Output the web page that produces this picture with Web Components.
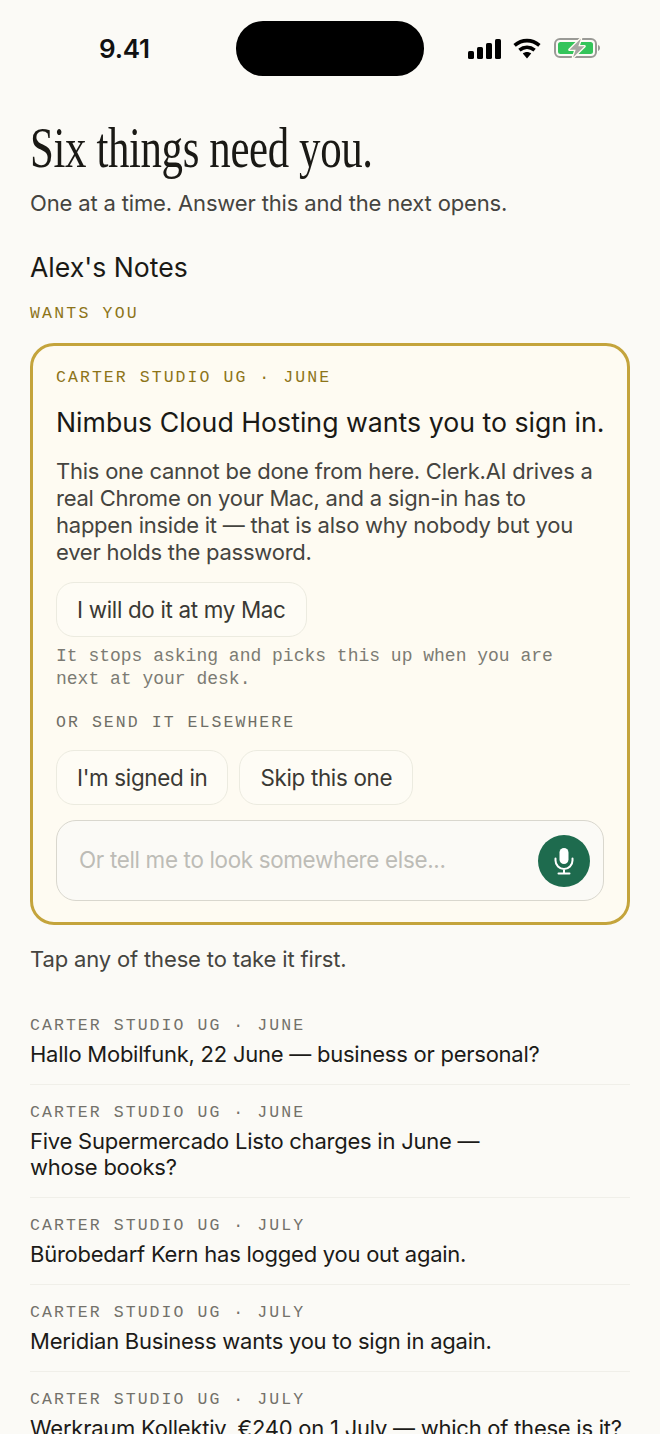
<!DOCTYPE html>
<html lang="en">
<head>
<meta charset="utf-8">
<title>Six things need you</title>
<style>
  html, body { margin: 0; height: 1434px; overflow: hidden; background: #fbfaf6; }
  body { font-family: Inter, "Liberation Sans", sans-serif; color: #1c1b18; }
</style>
</head>
<body>
<template id="status-tpl">
  <style>
    :host { display: flex; align-items: center; height: 96px; box-sizing: border-box; padding: 0 0 0 69px; }
    .time { width: 137px; margin-top: 2px; font: 600 26px/1 Inter, sans-serif; letter-spacing: -.2px; color: #111; }
    .island { width: 188px; height: 55px; border-radius: 27px; background: #000; }
    .icons { display: flex; align-items: center; gap: 11px; margin-left: 44px; }
    .batt { margin-left: 2px; }
    svg { display: block; }
  </style>
  <span class="time">9.41</span>
  <div class="island"></div>
  <div class="icons">
    <svg width="34" height="21" viewBox="0 0 34 21"><g fill="#000"><rect x="0" y="13" width="6" height="8" rx="1.6"/><rect x="9" y="9" width="6" height="12" rx="1.6"/><rect x="18" y="5" width="6" height="16" rx="1.6"/><rect x="27" y="1" width="6" height="20" rx="1.6"/></g></svg>
    <svg width="28" height="21" viewBox="0 0 28 21"><g fill="none" stroke="#000" stroke-width="3.6"><path d="M1.6 7.4C9 1 19 1 26.4 7.4"/><path d="M6.4 12.2C11 8.4 17 8.4 21.6 12.2"/></g><path d="M9.8 15.4 14 20.4l4.2-5c-2.4-2-6-2-8.4 0Z" fill="#000"/></svg>
    <svg class="batt" width="46" height="24" viewBox="0 0 46 24"><rect x="1" y="3" width="41" height="18" rx="5" fill="none" stroke="#9a9a96" stroke-width="2"/><rect x="4" y="6" width="35" height="12" rx="2.5" fill="#34c45a"/><path d="M44 9c1.3.4 2 1.6 2 3s-.7 2.6-2 3Z" fill="#9a9a96"/><path id="bolt" d="M27 2.5 15.5 13.8h6.2L19 21.5l11.5-11.3h-6.2Z" fill="#a6a6a2" stroke="#fffcf2" stroke-width="2.6" paint-order="stroke" stroke-linejoin="round"/></svg>
  </div>
</template>

<template id="intro-tpl">
  <style>
    :host { display: block; margin-top: 22px; }
    h1 { margin: 0; font: 400 56px/60px "Liberation Serif", serif; color: #1a1915; letter-spacing: -.5px; white-space: nowrap; }
    h1 span { display: inline-block; transform: scaleX(.766); transform-origin: 0 50%; }
    p { margin: 10px 0 0; font-size: 22px; letter-spacing: -.15px; line-height: 30px; color: #45443f; }
    h2 { margin: 32px 0 0; font: 400 26.6px/34px Inter, sans-serif; color: #1a1915; }
  </style>
  <h1><span><slot name="title"></slot></span></h1>
  <p><slot name="sub"></slot></p>
  <h2><slot name="project"></slot></h2>
</template>

<template id="label-tpl">
  <style>
    :host { display: block; font: 400 16.5px/20px "Liberation Mono", monospace; letter-spacing: 2.06px; color: var(--label-color, #73716a); }
  </style>
  <slot></slot>
</template>

<template id="button-tpl">
  <style>
    :host { display: inline-flex; align-items: center; height: 55px; box-sizing: border-box; padding: 1px 20px 0; border: 1.5px solid #ecebe0; border-radius: 18px; background: #fefcf5; font: 400 22.4px/1 Inter, sans-serif; letter-spacing: -.32px; color: #3a3934; white-space: nowrap; }
  </style>
  <slot></slot>
</template>

<template id="voice-tpl">
  <style>
    :host { display: flex; align-items: center; justify-content: space-between; height: 81px; box-sizing: border-box; padding: 0 13.5px 0 22px; border: 1.5px solid #d9d7ce; border-radius: 20px; background: #fbfaf6; font: 400 22.4px/1 Inter, sans-serif; letter-spacing: -.32px; color: #bdbcb6; }
    .mic { width: 52px; height: 52px; border-radius: 50%; background: #1e6b4e; display: flex; align-items: center; justify-content: center; }
    svg { display: block; }
  </style>
  <span><slot></slot></span>
  <div class="mic">
    <svg width="24" height="28" viewBox="0 0 24 28" fill="none" stroke="#fff" stroke-width="2" stroke-linecap="round"><rect x="7.5" y="1" width="9" height="16" rx="4.5" fill="#fff" stroke="none"/><path d="M3.5 11.5v2a8.5 8.5 0 0 0 17 0v-2M12 22v4.5M6.5 26.5h11"/></svg>
  </div>
</template>

<template id="card-tpl">
  <style>
    :host { display: block; margin-top: 19px; box-sizing: border-box; height: 582px; padding: 22px 23px 0 23px; border: 3px solid #c4a43c; border-radius: 24px; background: #fefbf2; --label-color: #8d7419; }
    h3 { margin: 16px 0 0; font: 400 26.7px/36px Inter, sans-serif; color: #1a1915; white-space: nowrap; }
    .body { margin: 18px 0 0; font-size: 22px; letter-spacing: -.24px; line-height: 27px; color: #45443f; }
    .first { margin-top: 16px; }
    .hint { margin: 8px 0 0; font: 400 18px/23px "Liberation Mono", monospace; color: #7c7b74; }
    .other { display: block; margin-top: 22px; --label-color: #6f6e66; }
    .row { display: flex; gap: 11px; margin-top: 17px; }
    wc-voice { margin-top: 15px; }
  </style>
  <wc-label><slot name="meta"></slot></wc-label>
  <h3><slot name="title"></slot></h3>
  <p class="body"><slot name="body"></slot></p>
  <div class="first"><slot name="primary"></slot></div>
  <p class="hint"><slot name="hint"></slot></p>
  <wc-label class="other"><slot name="other"></slot></wc-label>
  <div class="row"><slot name="choices"></slot></div>
  <wc-voice><slot name="input"></slot></wc-voice>
</template>

<template id="item-tpl">
  <style>
    :host { display: block; padding: 18px 0 17px; border-bottom: 1px solid #f0efe9; font: 400 22px/26px Inter, sans-serif; letter-spacing: -.24px; color: #1c1b18; }
    :host(:last-child) { border-bottom: 0; }
    .text { margin-top: 5px; }
  </style>
  <wc-label><slot name="meta"></slot></wc-label>
  <div class="text"><slot></slot></div>
</template>

<template id="page-tpl">
  <style>
    :host { display: block; padding: 0 30px; }
    .hint { margin: 19px 0 0; font-size: 22px; letter-spacing: -.15px; line-height: 30px; color: #45443f; }
    .list { margin-top: 24px; }
    wc-label.wants { margin-top: 20px; letter-spacing: 2.2px; --label-color: #8d7419; }
  </style>
  <wc-status></wc-status>
  <wc-intro>
    <span slot="title">Six things need you.</span>
    <span slot="sub">One at a time. Answer this and the next opens.</span>
    <span slot="project">Alex's Notes</span>
  </wc-intro>
  <wc-label class="wants">WANTS YOU</wc-label>
  <wc-card>
    <span slot="meta">CARTER STUDIO UG · JUNE</span>
    <span slot="title">Nimbus Cloud Hosting wants you to sign in.</span>
    <span slot="body">This one cannot be done from here. Clerk.AI drives a real Chrome on your Mac, and a sign-in has to happen inside it — that is also why nobody but you ever holds the password.</span>
    <wc-button slot="primary">I will do it at my Mac</wc-button>
    <span slot="hint">It stops asking and picks this up when you are next at your desk.</span>
    <span slot="other">OR SEND IT ELSEWHERE</span>
    <wc-button slot="choices">I'm signed in</wc-button>
    <wc-button slot="choices">Skip this one</wc-button>
    <span slot="input">Or tell me to look somewhere else...</span>
  </wc-card>
  <p class="hint">Tap any of these to take it first.</p>
  <div class="list">
    <wc-item><span slot="meta">CARTER STUDIO UG · JUNE</span>Hallo Mobilfunk, 22 June — business or personal?</wc-item>
    <wc-item><span slot="meta">CARTER STUDIO UG · JUNE</span>Five Supermercado Listo charges in June —<br>whose books?</wc-item>
    <wc-item><span slot="meta">CARTER STUDIO UG · JULY</span>Bürobedarf Kern has logged you out again.</wc-item>
    <wc-item><span slot="meta">CARTER STUDIO UG · JULY</span>Meridian Business wants you to sign in again.</wc-item>
    <wc-item><span slot="meta">CARTER STUDIO UG · JULY</span>Werkraum Kollektiv, €240 on 1 July — which of these is it?</wc-item>
  </div>
</template>

<wc-page></wc-page>

<script>
// each element just clones its template into an open shadow root
function define(tag, tplId) {
  customElements.define(tag, class extends HTMLElement {
    constructor() {
      super();
      this.attachShadow({mode: 'open'}).appendChild(document.getElementById(tplId).content.cloneNode(true));
    }
  });
}
define('wc-status', 'status-tpl');
define('wc-intro', 'intro-tpl');
define('wc-label', 'label-tpl');
define('wc-button', 'button-tpl');
define('wc-voice', 'voice-tpl');
define('wc-card', 'card-tpl');
define('wc-item', 'item-tpl');
define('wc-page', 'page-tpl');
</script>
</body>
</html>
